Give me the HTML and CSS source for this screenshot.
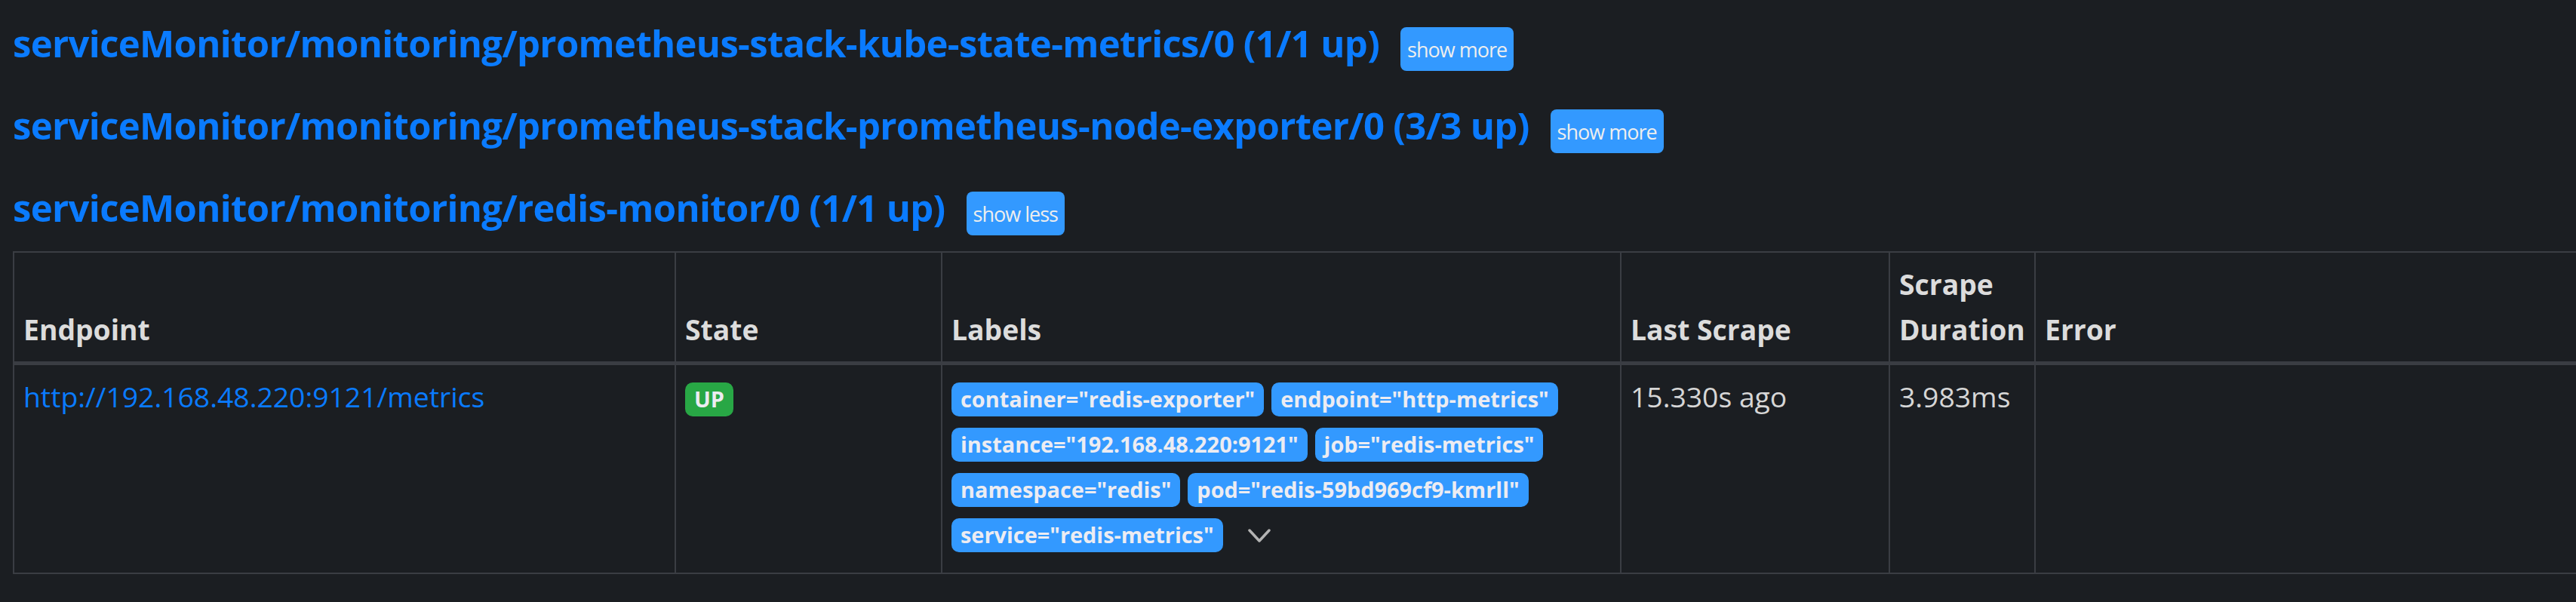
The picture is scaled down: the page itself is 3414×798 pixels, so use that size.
FILE: index.html
```html
<!DOCTYPE html>
<html lang="en">

<head>
    <meta charset="UTF-8">
    <meta name="viewport" content="width=device-width, initial-scale=1.0">
    <title>Targets</title>
    <link rel="stylesheet" href="styles.css">
</head>

<body>

    <div class="page">
        <div class="pool">
            <h2 class="pool-title"><a href="#">serviceMonitor/monitoring/prometheus-stack-kube-state-metrics/0 (1/1 up)</a></h2>
            <button class="btn-toggle">show more</button>
        </div>

        <div class="pool">
            <h2 class="pool-title"><a href="#">serviceMonitor/monitoring/prometheus-stack-prometheus-node-exporter/0 (3/3 up)</a></h2>
            <button class="btn-toggle">show more</button>
        </div>

        <div class="pool">
            <h2 class="pool-title"><a href="#">serviceMonitor/monitoring/redis-monitor/0 (1/1 up)</a></h2>
            <button class="btn-toggle">show less</button>
        </div>

        <table class="targets">
            <colgroup>
                <col class="col-endpoint">
                <col class="col-state">
                <col class="col-labels">
                <col class="col-last">
                <col class="col-duration">
                <col>
            </colgroup>
            <thead>
                <tr>
                    <th>Endpoint</th>
                    <th>State</th>
                    <th>Labels</th>
                    <th>Last Scrape</th>
                    <th>Scrape Duration</th>
                    <th>Error</th>
                </tr>
            </thead>
            <tbody>
                <tr>
                    <td><a href="#">http://192.168.48.220:9121/metrics</a></td>
                    <td><span class="badge badge-up">UP</span></td>
                    <td class="labels"><span class="badge">container="redis-exporter"</span><span class="badge">endpoint="http-metrics"</span><span class="badge">instance="192.168.48.220:9121"</span><span class="badge">job="redis-metrics"</span><span class="badge">namespace="redis"</span><span class="badge">pod="redis-59bd969cf9-kmrll"</span><span class="badge">service="redis-metrics"</span><span class="chevron"><svg width="30" height="19" viewBox="0 0 30 19"><polyline points="2,2 15,16 28,2" fill="none" stroke="#b3b3b3" stroke-width="3.5" stroke-linecap="round" stroke-linejoin="round"/></svg></span></td>
                    <td>15.330s ago</td>
                    <td>3.983ms</td>
                    <td></td>
                </tr>
            </tbody>
        </table>
    </div>

</body>

</html>
```

FILE: styles.css
```css
* {
    box-sizing: border-box;
    margin: 0;
    padding: 0;
}

body {
    background-color: #1b1e22;
    color: #d6d6d6;
    font-family: "Open Sans", "Noto Sans", sans-serif;
    font-size: 37.3px;
    line-height: 60px;
    overflow: hidden;
}

a {
    color: #0a7bff;
    text-decoration: none;
}

.page {
    padding: 25px 0 0 17px;
}

.pool {
    display: flex;
    align-items: baseline;
    gap: 28px;
    margin-top: 40px;
}

.pool:first-child {
    margin-top: 0;
}

.pool-title {
    font-size: 49px;
    line-height: 64px;
    font-weight: 700;
    letter-spacing: -0.65px;
    white-space: nowrap;
}

.btn-toggle {
    font-family: "Open Sans", "Noto Sans", sans-serif;
    font-size: 27px;
    line-height: 50px;
    letter-spacing: -1px;
    padding: 5px 9px 3px;
    color: #eeeeee;
    background-color: #3399ff;
    border: none;
    border-radius: 8px;
    white-space: nowrap;
}

/* targets table */
.targets {
    margin-top: 21px;
    width: 3430px;
    table-layout: fixed;
    border-collapse: collapse;
}

.col-endpoint {
    width: 877px;
}

.col-state {
    width: 353px;
}

.col-labels {
    width: 900px;
}

.col-last {
    width: 356px;
}

.col-duration {
    width: 193px;
}

.targets th,
.targets td {
    border: 2px solid #3a3d43;
    padding: 12px;
    text-align: left;
}

.targets th {
    font-weight: 700;
    vertical-align: bottom;
    color: #dcdcdc;
    border-bottom-width: 5px;
}

.targets td {
    vertical-align: top;
}

.targets td.labels {
    padding-bottom: 23px;
}

.badge {
    display: inline-block;
    font-size: 28.9px;
    font-weight: 700;
    line-height: 1;
    padding: 8px 12px;
    margin-right: 10px;
    color: #ececf2;
    background-color: #3399ff;
    border-radius: 10px;
    white-space: nowrap;
}

.badge-up {
    background-color: #28a745;
}

.chevron {
    display: inline-block;
    margin-left: 23px;
}

.chevron svg {
    display: block;
}
```
